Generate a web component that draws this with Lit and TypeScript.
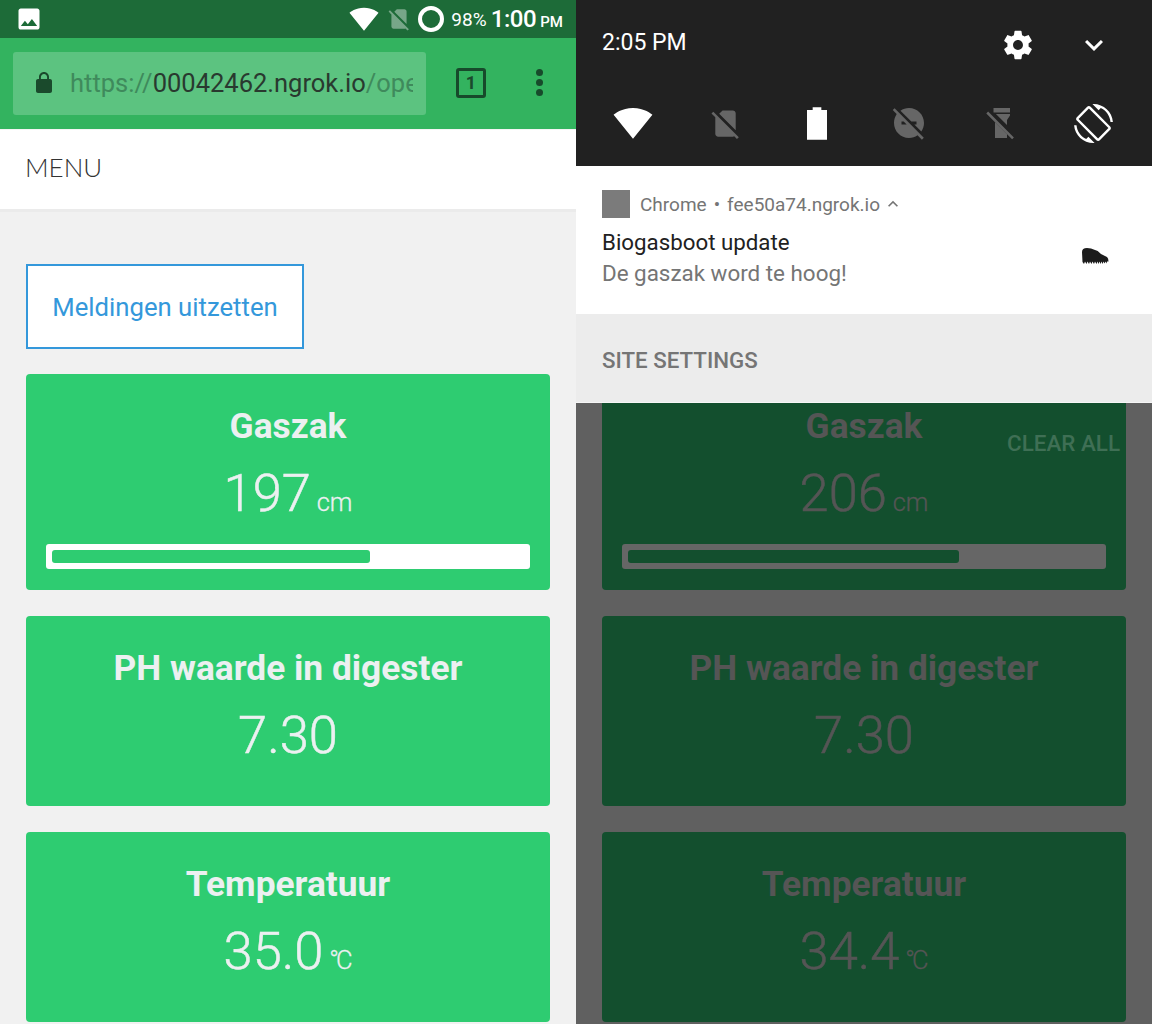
import {LitElement, html, css, svg} from 'lit';
import {customElement} from 'lit/decorators.js';
import {styleMap} from 'lit/directives/style-map.js';

const WIFI = svg`<path d="M12.01 21.49L23.64 7c-.45-.34-4.93-4-11.64-4C5.28 3 .81 6.66.36 7l11.63 14.49.01.01.01-.01z"/>`;
const NO_SIM = svg`<path d="M18.99 5c0-1.1-.89-2-1.99-2h-7L7.66 5.34 19 16.68 18.99 5zM3.65 3.88L2.38 5.15 5 7.77V19c0 1.1.9 2 2 2h10.01c.35 0 .67-.1.96-.26l1.88 1.88 1.27-1.27L3.65 3.88z"/>`;
const PHOTO = svg`<path d="M21 19V5c0-1.1-.9-2-2-2H5c-1.1 0-2 .9-2 2v14c0 1.1.9 2 2 2h14c1.1 0 2-.9 2-2zM8.5 13.5l2.5 3.01L14.5 12l4.5 6H5l3.5-4.5z"/>`;
const LOCK = svg`<path d="M18 8h-1V6c0-2.76-2.24-5-5-5S7 3.24 7 6v2H6c-1.1 0-2 .9-2 2v10c0 1.1.9 2 2 2h12c1.1 0 2-.9 2-2V10c0-1.1-.9-2-2-2zM8.9 6c0-1.71 1.39-3.1 3.1-3.1s3.1 1.39 3.1 3.1v2H8.9V6z"/>`;
const GEAR = svg`<path d="M19.43 12.98c.04-.32.07-.64.07-.98s-.03-.66-.07-.98l2.11-1.65c.19-.15.24-.42.12-.64l-2-3.46c-.12-.22-.39-.3-.61-.22l-2.49 1c-.52-.4-1.08-.73-1.69-.98l-.38-2.65C14.46 2.18 14.25 2 14 2h-4c-.25 0-.46.18-.49.42l-.38 2.65c-.61.25-1.17.59-1.69.98l-2.49-1c-.23-.09-.49 0-.61.22l-2 3.46c-.13.22-.07.49.12.64l2.11 1.65c-.04.32-.07.65-.07.98s.03.66.07.98l-2.11 1.65c-.19.15-.24.42-.12.64l2 3.46c.12.22.39.3.61.22l2.49-1c.52.4 1.08.73 1.69.98l.38 2.65c.03.24.24.42.49.42h4c.25 0 .46-.18.49-.42l.38-2.65c.61-.25 1.17-.59 1.69-.98l2.49 1c.23.09.49 0 .61-.22l2-3.46c.12-.22.07-.49-.12-.64l-2.11-1.65zM12 15.5c-1.93 0-3.5-1.57-3.5-3.5s1.57-3.5 3.5-3.5 3.5 1.57 3.5 3.5-1.57 3.5-3.5 3.5z"/>`;
const CHEVRON = svg`<path d="M16.59 8.59L12 13.17 7.41 8.59 6 10l6 6 6-6z"/>`;
const CARET_UP = svg`<path d="M12 8l-6 6 1.41 1.41L12 10.83l4.59 4.58L18 14z"/>`;
const BATTERY = svg`<path d="M6 4.2h3.4V2.6h5.2v1.6H18V22H6z"/>`;
const DND_OFF = svg`<path d="M17 11v2h-1.46l4.68 4.68C21.34 16.07 22 14.11 22 12c0-5.52-4.48-10-10-10-2.11 0-4.07.66-5.68 1.78L13.54 11H17zM2.41 2.13L1.14 3.4l2.64 2.64C2.66 7.93 2 9.89 2 12c0 5.52 4.48 10 10 10 2.11 0 4.07-.66 5.68-1.78l2.92 2.92 1.27-1.27L2.41 2.13zM7 13v-2h1.46l2 2H7z"/>`;
const FLASH_OFF = svg`<path d="M7 2h11v3H7zM8.6 6H18v1l-2 3v3.4zM8 11.4l8 8V22H8zM3.4 4.4L2.2 5.6l17.2 17.2 1.2-1.2z"/>`;
const ROTATE = svg`<path d="M16.48 2.52c3.27 1.55 5.61 4.72 5.97 8.48h1.5C23.44 4.84 18.29 0 12 0l-.66.03 3.81 3.81 1.33-1.32zm-6.25-.77c-.59-.59-1.54-.59-2.12 0L1.75 8.11c-.59.59-.59 1.54 0 2.12l12.02 12.02c.59.59 1.54.59 2.12 0l6.36-6.36c.59-.59.59-1.54 0-2.12L10.23 1.75zm4.6 19.44L2.81 9.17l6.36-6.36 12.02 12.02-6.36 6.36zm-7.31.29C4.25 19.94 1.91 16.76 1.55 13H.05C.56 19.16 5.71 24 12 24l.66-.03-3.81-3.81-1.33 1.32z"/>`;
// notification badge, a small dark boot with studs along the sole
const BOOT = svg`<path d="M2 5Q2 1 7 1L11 1.6Q17 3 21 7L27 10Q28.5 11 28.5 14.5L27 14.5 26.5 16.5 25.5 14.5 24.5 16.5 23.5 14.5 22.5 17 21.5 14.5 20.5 17 19.5 14.5 18.5 17 17.5 14.5 16.5 17 15 14.5 14 17 12.5 14.5 11.5 17 10 14.5 9 17 7.5 14.5 6.5 17 5 14.5 4 17 2.5 15z"/>`;

const tiles = [
  {icon: WIFI, size: 40, dim: false},
  {icon: NO_SIM, size: 35, dim: true},
  {icon: BATTERY, size: 40, dim: false},
  {icon: DND_OFF, size: 36, dim: true},
  {icon: FLASH_OFF, size: 36, dim: true},
  {icon: ROTATE, size: 39, dim: false},
];

interface Reading {
  title: string;
  value: string;
  unit?: string;
  narrowUnit?: boolean;
  pct?: number;
}

const leftReadings: Reading[] = [
  {title: 'Gaszak', value: '197', unit: 'cm', pct: 67.4},
  {title: 'PH waarde in digester', value: '7.30'},
  {title: 'Temperatuur', value: '35.0', unit: '°C', narrowUnit: true},
];
const rightReadings: Reading[] = [
  {title: 'Gaszak', value: '206', unit: 'cm', pct: 70.2},
  {title: 'PH waarde in digester', value: '7.30'},
  {title: 'Temperatuur', value: '34.4', unit: '°C', narrowUnit: true},
];

@customElement('app-root')
export class AppRoot extends LitElement {
  static override styles = css`
    :host {
      display: grid;
      grid-template-columns: 576px 576px;
      width: 1152px;
      height: 1024px;
      overflow: hidden;
      font-family: Roboto, 'Liberation Sans', sans-serif;
    }
    svg {
      display: block;
      fill: currentColor;
      flex: none;
    }
    .pane {
      display: flex;
      flex-direction: column;
      height: 1024px;
      overflow: hidden;
    }
    .left {
      background: #f1f1f1;
    }
    .right {
      background: #606060;
    }

    /* phone chrome, left */
    .status {
      display: flex;
      align-items: center;
      height: 38px;
      padding: 0 13px 0 15px;
      background: #1d6b38;
      color: #fff;
      box-sizing: border-box;
    }
    .status .spacer {
      flex: 1;
    }
    .status .sim {
      opacity: 0.4;
      margin-left: 7px;
    }
    .ring {
      width: 26px;
      height: 26px;
      margin-left: 6px;
      border: 4px solid #fff;
      border-radius: 50%;
      box-sizing: border-box;
    }
    .batt {
      font-size: 19px;
      margin-left: 7px;
    }
    .clock {
      font-size: 24px;
      font-weight: 500;
      letter-spacing: -0.4px;
      margin-left: 4px;
    }
    .ampm {
      font-size: 15px;
      font-weight: 500;
      margin-left: 4px;
      padding-top: 5px;
    }
    .toolbar {
      display: flex;
      align-items: center;
      height: 91px;
      padding: 0 0 2px 13px;
      background: #33b35f;
      box-sizing: border-box;
      color: #1a4a2c;
    }
    .omnibox {
      display: flex;
      align-items: center;
      width: 413px;
      height: 63px;
      padding: 0 13px 0 19px;
      margin-top: 1px;
      border-radius: 3px;
      background: #5cc380;
      box-sizing: border-box;
    }
    .url {
      flex: 1;
      margin-left: 14px;
      overflow: hidden;
      white-space: nowrap;
      font-size: 25.5px;
      color: #3f8a5c;
    }
    .url b {
      font-weight: 400;
      color: #29392f;
    }
    .tabs {
      display: flex;
      align-items: center;
      justify-content: center;
      width: 30px;
      height: 30px;
      margin-left: 30px;
      border: 3px solid #174a2b;
      border-radius: 3px;
      box-sizing: border-box;
      font-size: 18px;
      font-weight: 700;
    }
    .dots {
      display: flex;
      flex-direction: column;
      gap: 3px;
      margin-left: 50px;
    }
    .dots i {
      width: 7px;
      height: 7px;
      border-radius: 50%;
      background: #174a2b;
    }
    .menu {
      display: flex;
      align-items: center;
      height: 83px;
      padding: 0 0 5px 25px;
      background: #fff;
      border-bottom: 3px solid #ebebeb;
      border-top: 1px solid #f5f5f5;
      box-sizing: border-box;
      font-family: Lato, sans-serif;
      font-weight: 300;
      font-size: 26px;
      color: #333;
    }
    .page {
      display: flex;
      flex-direction: column;
      align-items: flex-start;
      padding: 52px 26px 0;
    }
    .notify-btn {
      width: 278px;
      height: 85px;
      margin: 0 0 25px;
      padding: 0;
      background: #fff;
      border: 2px solid #3498db;
      box-sizing: border-box;
      font: 400 25.7px Roboto, sans-serif;
      color: #3498db;
    }

    /* readings, shared by both panes */
    .stack {
      display: flex;
      flex-direction: column;
      align-self: stretch;
      gap: 26px;
    }
    .card {
      min-height: 190px;
      padding: 32px 20px 21px;
      border-radius: 4px;
      background: var(--card);
      color: var(--ink);
      text-align: center;
      box-sizing: border-box;
    }
    .title {
      height: 40px;
      font-size: 35.3px;
      font-weight: 700;
      line-height: 40px;
    }
    .value {
      height: 60px;
      margin-top: 17px;
      font-size: 52.5px;
      font-weight: 300;
      -webkit-text-stroke: 0.5px currentColor;
      line-height: 60px;
    }
    .unit {
      margin-left: -7px;
      font-size: 25.5px;
      -webkit-text-stroke: 0.3px currentColor;
    }
    .unit.narrow {
      letter-spacing: -3px;
      margin-right: 3px;
    }
    .track {
      height: 25px;
      margin-top: 21px;
      padding: 6px;
      border-radius: 3px;
      background: var(--track);
      box-sizing: border-box;
    }
    .fill {
      height: 13px;
      border-radius: 3px;
      background: var(--fill);
    }
    .left .stack {
      --card: #2ecc71;
      --ink: #ecf0f1;
      --track: #fff;
      --fill: #2ecc71;
    }
    .right .stack {
      --card: #134f2e;
      --ink: #555;
      --track: #666;
      --fill: #134f2e;
    }

    /* notification shade, right */
    .shade-head {
      height: 166px;
      background: #212121;
      color: #fff;
    }
    .shade-top {
      display: flex;
      align-items: center;
      height: 84px;
      padding: 0 40px 0 26px;
    }
    .shade-time {
      flex: 1;
      font-size: 23px;
      font-weight: 400;
      margin-top: 1px;
    }
    .shade-top .chev {
      margin-left: 41px;
      margin-top: 5px;
    }
    .shade-top .gear {
      margin-top: 5px;
    }
    .tiles {
      display: grid;
      grid-template-columns: repeat(6, 92px);
      padding: 0 0 0 11px;
      height: 78px;
      align-items: center;
      justify-items: center;
    }
    .tile-dim {
      color: #666;
    }
    .notif {
      position: relative;
      height: 148px;
      padding: 24px 26px 0;
      background: #fff;
      box-sizing: border-box;
    }
    .notif-head {
      display: flex;
      align-items: center;
      height: 28px;
      font-size: 19px;
      color: #757575;
    }
    .notif-icon {
      width: 28px;
      height: 28px;
      margin-right: 10px;
      background: #7b7b7b;
    }
    .notif-head .sep {
      margin: 0 7px;
    }
    .notif-head svg {
      margin-left: 3px;
    }
    .notif-title {
      margin-top: 9px;
      font-size: 22.3px;
      line-height: 30px;
      color: #212121;
    }
    .notif-body {
      font-size: 22.4px;
      line-height: 32px;
      color: #757575;
    }
    .boot {
      position: absolute;
      left: 504px;
      top: 81px;
      color: #1c1c1c;
    }
    .settings {
      display: flex;
      align-items: center;
      height: 89px;
      padding: 3px 26px 0;
      background: #ececec;
      border-bottom: 1px solid #f6f6f6;
      box-sizing: border-box;
      font-size: 22.3px;
      font-weight: 500;
      color: #757575;
    }
    .scrim {
      position: relative;
      flex: 1;
      padding: 0 26px;
      overflow: hidden;
    }
    .scrim .stack {
      margin-top: -29px;
    }
    .clear {
      position: absolute;
      top: 27px;
      right: 32px;
      font-size: 22.4px;
      font-weight: 500;
      color: #3f6f55;
    }
  `;

  private _icon(body: unknown, size: number, cls = '') {
    return html`<svg class=${cls} width=${size} height=${size} viewBox="0 0 24 24">${body}</svg>`;
  }

  private _card(r: Reading) {
    return html`<div class="card">
      <div class="title">${r.title}</div>
      <div class="value">
        ${r.value}
        ${r.unit ? html`<span class="unit ${r.narrowUnit ? 'narrow' : ''}">${r.unit}</span>` : ''}
      </div>
      ${r.pct !== undefined
        ? html`<div class="track"><div class="fill" style=${styleMap({width: `${r.pct}%`})}></div></div>`
        : ''}
    </div>`;
  }

  override render() {
    return html`
      <section class="pane left">
        <div class="status">
          ${this._icon(PHOTO, 28)}
          <span class="spacer"></span>
          ${this._icon(WIFI, 30)} ${this._icon(NO_SIM, 26, 'sim')}
          <span class="ring"></span>
          <span class="batt">98%</span>
          <span class="clock">1:00</span>
          <span class="ampm">PM</span>
        </div>
        <div class="toolbar">
          <div class="omnibox">
            ${this._icon(LOCK, 24)}
            <div class="url">https://<b>00042462.ngrok.io</b>/open</div>
          </div>
          <div class="tabs">1</div>
          <div class="dots"><i></i><i></i><i></i></div>
        </div>
        <div class="menu">MENU</div>
        <div class="page">
          <button class="notify-btn">Meldingen uitzetten</button>
          <div class="stack">${leftReadings.map((r) => this._card(r))}</div>
        </div>
      </section>
      <section class="pane right">
        <div class="shade-head">
          <div class="shade-top">
            <span class="shade-time">2:05 PM</span>
            ${this._icon(GEAR, 34, 'gear')} ${this._icon(CHEVRON, 36, 'chev')}
          </div>
          <div class="tiles">
            ${tiles.map((t) => this._icon(t.icon, t.size, t.dim ? 'tile-dim' : ''))}
          </div>
        </div>
        <div class="notif">
          <div class="notif-head">
            <span class="notif-icon"></span>
            <span>Chrome</span><span class="sep">•</span><span>fee50a74.ngrok.io</span>
            ${this._icon(CARET_UP, 20)}
          </div>
          <div class="notif-title">Biogasboot update</div>
          <div class="notif-body">De gaszak word te hoog!</div>
          <svg class="boot" width="30" height="18" viewBox="0 0 30 18">${BOOT}</svg>
        </div>
        <div class="settings">SITE SETTINGS</div>
        <div class="scrim">
          <div class="stack">${rightReadings.map((r) => this._card(r))}</div>
          <span class="clear">CLEAR ALL</span>
        </div>
      </section>
    `;
  }
}
